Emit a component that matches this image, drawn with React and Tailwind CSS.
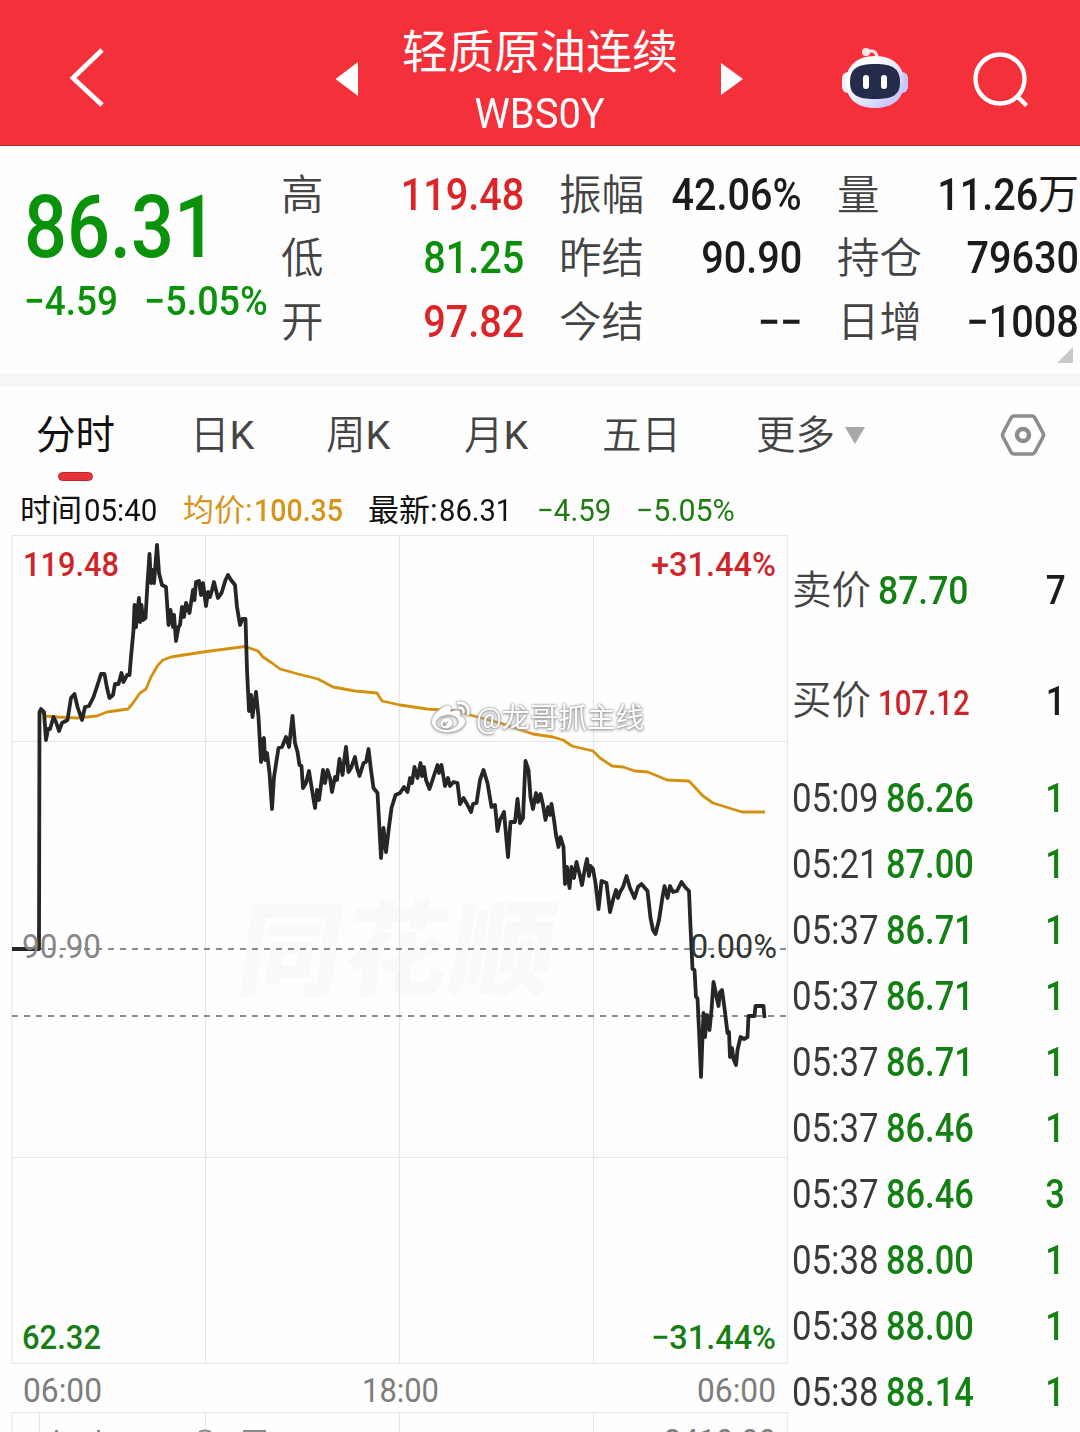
import React from 'react';
import { FaWeibo } from 'react-icons/fa';

const stats = [
  [
    { label: '高', value: '119.48', color: 'text-[#dc2529]' },
    { label: '低', value: '81.25', color: 'text-[#0a8f0a]' },
    { label: '开', value: '97.82', color: 'text-[#dc2529]' },
  ],
  [
    { label: '振幅', value: '42.06%' },
    { label: '昨结', value: '90.90' },
    { label: '今结', value: '−−' },
  ],
  [
    { label: '量', value: '11.26', unit: '万' },
    { label: '持仓', value: '79630' },
    { label: '日增', value: '−1008' },
  ],
];

const trades = [
  ['05:09', '86.26', '1'],
  ['05:21', '87.00', '1'],
  ['05:37', '86.71', '1'],
  ['05:37', '86.71', '1'],
  ['05:37', '86.71', '1'],
  ['05:37', '86.46', '1'],
  ['05:37', '86.46', '3'],
  ['05:38', '88.00', '1'],
  ['05:38', '88.00', '1'],
  ['05:38', '88.14', '1'],
];

const pricePoints = `12,949 39,949 39.5,712 41,709 44,712 46,740 48,729 50,729 53.5,717 56,722 59,731 62,723 67.5,720 71,698 74.5,694
77.5,707 82,720 85,707 89,706 93.5,697 97.5,685 101,674 104.5,674 107,688 109.5,698 113,695 115,684 118.5,684 121.5,673 123.5,682
127,675 129.5,675 131,657 133.5,630 134.5,605 136,627 137.5,610 139,598 140,622 141.5,605 143,620 145.5,618 147.5,583 149.5,554 151,583 152.5,570 154,583
157,545 159,573 162,585 166,587 168.5,625 170.5,610 173,627 174,615 176,641 178.5,627 180,625 182,607 184,617 186,603 189.5,613 193,590
194.5,600 196,582 199,581 201,595 203,583 206,606 208,592 210,597 212,590 214,582 218,598 221.5,593 225.5,580 228,575 231,580 235,585 237,607 240,625 242.5,619
245.5,619 247,670 249,711 251,695 252.5,717 254,705 256,692 258.5,717 261,762 262.5,740 264,738 265,760 267,753 269.5,773 272,809 274,777 278.5,748 282,747
286,737 289,747 292.5,716 295,743 297.5,752 299.5,765 301.5,766 303,788 306,783 309,771 312,790 315,808 317,790 319,800 323,770 325,783 327.5,770 330,778 332,792
335,777 337,780 339.5,759 342.5,775 344,762 346,747 348.5,772 351,768 355,757 357,768 359.5,776 363.5,763 366,762 368.5,749 371,770 373.5,788 377.5,793 379,820
381,858 383.5,828 386,852 389,827 391.5,808 395.5,795 400,793 404,787 407.5,792 410,778 412,783 414.5,767 417.5,778 420.5,763 422,776 424,767 426,780
429.5,789 433.5,777 437.5,765 439,773 441.5,765 445,786 448,778 450,786 453.5,782 457.5,783 460,804 463.5,798 467,804 471,812 473,804 476.5,803 480,780 483.5,770
487.5,783 491.5,807 495,805 497.5,831 500,820 504,812 508,857 510.5,822 515,822 517.5,799 520,823 523,818 525.5,761 528.5,770 530.5,797 533,809
536,793 538,802 540.5,794 543,805 545.5,820 548,807 550,815 551.5,804 554,820 556,835 558.5,847 560.5,837 563.5,847 565,884 567,867 569.5,888 571.5,867 574,878 576.5,862
580,876 582,885 585,868 587,859 589,876 590.5,866 593,869 595.5,883 598.5,909 601.5,881 606.5,883 610,912 613.5,898 616,890 618,898 620,892 623,887 626.5,876 630,888
634.5,898 638,887 641.5,884 647.5,891 650.5,918 653,930 655.5,934 659,920 662.5,897 664.5,886 667.5,898 670,886 673,892 677,891 681.5,882 685,887
689,891 690.5,927 692.5,969 694.5,970 696,997 697.5,998 699,1030 701,1077 702.5,1037 703.5,1013 705,1037 707,1015 709.5,1030 711.5,1010 713.5,982 716,994
718.5,1006 720,992 722,990 724.5,1008 727.5,1033 729,1032 730,1057 732,1048 733.5,1059 736,1065 737.5,1050 740.5,1037 744,1039 747.5,1037 748.5,1016 754.5,1016 755.5,1006 763.5,1006 764.5,1018`;

const avgPoints = `41,712 46,716 57,717 77,718 97,716 107,712 128,709 133,703 140,693 146,689 151,677 158,665 163,660 171,657 203,652 245,646.5
258,651 263,657 272,663 280,669 298,674 318,679 333,687 355,691 377,693 382,701 400,705 427,709 457,711 470,715 500,723 533,734
553,737 563,740 572,746 593,751 600,758 612,766 623,767 635,771 648,772 667,780 689,781 703,796 713,803 742,812 765,812`;

const ChartText = ({ x, y, w, className, children }) => (
  <text x={x} y={y} textLength={w} lengthAdjust="spacingAndGlyphs" fontSize="34" className={className}>
    {children}
  </text>
);

const Header = () => (
  <header className="flex h-[146px] items-center border-b border-[#b3262e] bg-[#f4303a]">
    <svg className="ml-[66px] mt-2 h-[64px] w-[40px]" viewBox="0 0 40 64" fill="none" stroke="white" strokeWidth="4.8">
      <path d="M36 5 L7 33 L36 60" />
    </svg>
    <svg className="ml-[229px] mt-3 h-[36px] w-[24px]" viewBox="0 0 24 36" fill="white">
      <path d="M0.5 18 L23 1 V35 Z" />
    </svg>
    <div className="ml-[41px] flex w-[280px] flex-col items-center pt-4 text-white">
      <div className="h-[62px] whitespace-nowrap text-[46px] leading-[62px]">轻质原油连续</div>
      <div className="h-[58px] scale-x-[0.95] text-[42px] leading-[62px]">WBS0Y</div>
    </div>
    <svg className="ml-[40px] mt-3 h-[36px] w-[24px]" viewBox="0 0 24 36" fill="white">
      <path d="M23 18 L1 2 V34 Z" />
    </svg>
    <svg className="ml-[96px] mt-2 h-[66px] w-[70px]" viewBox="0 0 70 66">
      <defs>
        <linearGradient id="helmet" x1="0" y1="0" x2="1" y2="1">
          <stop offset="0.3" stopColor="#ffffff" />
          <stop offset="1" stopColor="#b9b8fb" />
        </linearGradient>
      </defs>
      <path d="M27 8 C34 5 37 9 37 14" fill="none" stroke="#ffe9ec" strokeWidth="3" />
      <circle cx="26" cy="8" r="4" fill="#ffe9ec" />
      <rect x="2" y="28" width="12" height="21" rx="6" fill="#eeeefe" />
      <rect x="56" y="28" width="12" height="21" rx="6" fill="#c5c8fb" />
      <path d="M35 12 C54 12 64 23 64 38 C64 55 53 64 35 64 C17 64 6 55 6 38 C6 23 16 12 35 12 Z" fill="url(#helmet)" />
      <path d="M35 20 C53 20 60 25 60 38 C60 51 53 55 35 55 C17 55 10 51 10 38 C10 25 17 20 35 20 Z" fill="#252b4b" />
      <rect x="23" y="31" width="6" height="14" rx="3" fill="white" />
      <rect x="41" y="31" width="6" height="14" rx="3" fill="white" />
    </svg>
    <svg className="ml-[62px] mt-[16px] h-[60px] w-[60px]" viewBox="0 0 60 60" fill="none" stroke="white" strokeWidth="4.4">
      <circle cx="28" cy="28" r="24.5" />
      <path d="M44.5 44.5 L54.5 54.5" />
    </svg>
  </header>
);

const StatColumn = ({ rows, className }) => (
  <div className={`flex flex-col ${className}`}>
    {rows.map((row) => (
      <div key={row.label} className="flex h-[63.5px] items-center justify-between whitespace-nowrap">
        <span className="pt-[6px] text-[42.5px] font-[350] text-[#444]">{row.label}</span>
        <span className={`flex items-center font-medium ${row.color || 'text-[#1c1a1b]'}`}>
          <span className="origin-right scale-x-[0.9] pt-1 text-[44px]">{row.value}</span>
          {row.unit && <span className="pt-[6px] text-[41px] font-normal">{row.unit}</span>}
        </span>
      </div>
    ))}
  </div>
);

const Quote = () => (
  <section className="flex h-[227px] pt-[15px]">
    <div className="w-[281px] shrink-0 whitespace-nowrap pl-[24px] font-medium text-[#0a930a]">
      <div className="h-[110px] origin-left scale-x-[0.86] text-[88px] leading-[132px]">86.31</div>
      <div className="flex h-[60px] items-center text-[41px] leading-[60px]">
        <span className="w-[120px] origin-left scale-x-[0.9]">−4.59</span>
        <span className="origin-left scale-x-[0.92]">−5.05%</span>
      </div>
    </div>
    <StatColumn rows={stats[0]} className="w-[243px]" />
    <StatColumn rows={stats[1]} className="ml-[35px] w-[243px]" />
    <div className="relative ml-[35px] w-[242px]">
      <StatColumn rows={stats[2]} className="w-full" />
      <svg className="absolute right-[6px] top-[186px] h-4 w-4" viewBox="0 0 16 16" fill="#c8c8c8">
        <path d="M16 0 V16 H0 Z" />
      </svg>
    </div>
  </section>
);

const Tabs = () => (
  <nav className="flex h-[104px] items-start whitespace-nowrap pt-[14px] text-[39.5px] font-[350] leading-[70px] text-[#444]">
    <div className="ml-[36px] flex w-[154px] flex-col font-normal text-[#111]">
      分时
      <span className="ml-[22px] mt-[1px] h-[9px] w-[35px] rounded-full border border-[#c0262c] bg-[#e5353b]"></span>
    </div>
    <div className="w-[136px]">日<span className="font-normal">K</span></div>
    <div className="w-[138px]">周<span className="font-normal">K</span></div>
    <div className="w-[138px]">月<span className="font-normal">K</span></div>
    <div className="w-[154px]">五日</div>
    <div className="flex w-[244px] items-center">
      更多
      <svg className="ml-[10px] mb-[3px] h-[18px] w-[20px]" viewBox="0 0 20 18" fill="#a8a8a8">
        <path d="M0 1 H20 L10 18 Z" />
      </svg>
    </div>
    <svg className="mt-3 h-[44px] w-[46px]" viewBox="0 0 46 44" fill="none" stroke="#8c8c8c">
      <path d="M14 3 H32 Q34 3 35 5 L43 20 Q44 22 43 24 L35 39 Q34 41 32 41 H14 Q12 41 11 39 L3 24 Q2 22 3 20 L11 5 Q12 3 14 3 Z" strokeWidth="3.6" />
      <circle cx="23" cy="22" r="6" strokeWidth="4.5" />
    </svg>
  </nav>
);

const InfoBar = () => (
  <div className="flex h-[44px] items-center whitespace-nowrap pb-[4px] text-[31px] leading-[44px] text-[#111]">
    <div className="ml-5 flex w-[163px]">时间<span className="ml-[2px] origin-left scale-x-[0.95]">05:40</span></div>
    <div className="flex w-[185px] text-[#d8941a]">均价:<span className="ml-[1px] origin-left scale-x-[0.92] font-medium">100.35</span></div>
    <div className="flex w-[168px]">最新:<span className="ml-[1px] origin-left scale-x-[0.94]">86.31</span></div>
    <div className="ml-[1px] w-[99px] origin-left scale-x-[0.95] text-[#1f7d12]">−4.59</div>
    <div className="origin-left scale-x-[0.98] text-[#1f7d12]">−5.05%</div>
  </div>
);

const Chart = () => (
  <div className="relative h-[897px] w-[790px] shrink-0">
    <svg className="block h-[897px] w-[790px]" viewBox="0 535 790 897">
      <text x="0" y="0" fontSize="104" fontWeight="900" textLength="316" transform="translate(234 988) skewX(-8)" fill="#f8f9f9">同花顺</text>

      {/* grid */}
      <g stroke="#e6e6e6" strokeWidth="1.2" fill="none">
        <rect x="12" y="535.5" width="775.5" height="828" />
        <path d="M205.5 535 V1363 M399.5 535 V1363 M593.5 535 V1363" />
        <path d="M12 741.5 H787 M12 1157.5 H787" />
        <path d="M12 1432 V1412.5 H787.5 V1432 M39.5 1412 V1432 M205.5 1412 V1432 M399.5 1412 V1432 M593.5 1412 V1432" />
      </g>
      <path d="M36 949 H787 M12 1016 H787" stroke="#666" strokeWidth="1.5" strokeDasharray="6 6" />

      <polyline points={avgPoints} fill="none" stroke="#d4900f" strokeWidth="2.8" strokeLinejoin="round" />
      <polyline points={pricePoints} fill="none" stroke="#262626" strokeWidth="3.8" strokeLinejoin="round" />

      <g fontWeight="500">
        <ChartText x="23" y="576" w="96" className="fill-[#cf2529]">119.48</ChartText>
        <ChartText x="651" y="576" w="125" className="fill-[#cf2529]">+31.44%</ChartText>
        <ChartText x="22" y="1349" w="79" className="fill-[#177d14]">62.32</ChartText>
        <ChartText x="651" y="1349" w="125" className="fill-[#177d14]">−31.44%</ChartText>
      </g>
      <ChartText x="22" y="958" w="79" className="fill-[#868686]">90.90</ChartText>
      <ChartText x="690" y="958" w="87" className="fill-[#333]">0.00%</ChartText>
      <ChartText x="23" y="1402" w="79" className="fill-[#7d7d7d]">06:00</ChartText>
      <ChartText x="362" y="1402" w="77" className="fill-[#7d7d7d]">18:00</ChartText>
      <ChartText x="697" y="1402" w="79" className="fill-[#7d7d7d]">06:00</ChartText>
      <ChartText x="664" y="1453" w="112" className="fill-[#7d7d7d]">3410.00</ChartText>

      {/* top edges of the volume legend */}
      <path d="M55 1431 H58 M97 1431 H100 M199 1432 Q205 1429 211 1432 M243 1431 H266" stroke="#8a8a8a" strokeWidth="2" fill="none" />
    </svg>
    <div className="absolute left-[432px] top-[162px] flex items-center text-[28.5px] leading-[40px] text-white [filter:drop-shadow(0_0_1px_#888)_drop-shadow(0_1px_1.5px_#aaa)]">
      <FaWeibo size={38} />
      <span className="ml-[6px] whitespace-nowrap pt-[2px]">@龙哥抓主线</span>
    </div>
  </div>
);

const BookRow = ({ label, price, count, priceClass }) => (
  <div className="flex h-[110.5px] items-center whitespace-nowrap">
    <span className="w-[86px] text-[39.5px] font-[350] text-[#444]">{label}</span>
    <span className={`w-[150px] origin-left pt-[2px] font-medium ${priceClass}`}>{price}</span>
    <span className="ml-auto mr-[14px] origin-right scale-x-[0.88] pt-[2px] text-[40px] font-medium text-[#1c1a1b]">{count}</span>
  </div>
);

const Ticks = () => (
  <aside className="flex-1 whitespace-nowrap pl-[2px]">
    <BookRow label="卖价" price="87.70" count="7" priceClass="text-[39px] text-[#128012] scale-x-[0.91]" />
    <BookRow label="买价" price="107.12" count="1" priceClass="text-[35px] leading-[46px] pt-[6px] text-[#cc2428] scale-x-[0.84]" />
    <div className="mt-[10px] flex flex-col text-[40px] leading-[66px]">
      {trades.map(([time, price, count], i) => (
        <div key={i} className="flex h-[66px] font-medium text-[#128012]">
          <span className="w-[94px] origin-left scale-x-[0.87] font-normal text-[#3a393b]">{time}</span>
          <span className="origin-left scale-x-[0.86]">{price}</span>
          <span className="ml-auto mr-[15px] origin-right scale-x-[0.86]">{count}</span>
        </div>
      ))}
    </div>
  </aside>
);

const App = () => {
  return (
    <div className="h-[1432px] w-[1080px] overflow-hidden bg-[#fefefe] font-[Roboto,'Noto_Sans_CJK_SC',sans-serif]">
      <Header />
      <Quote />
      <div className="h-[14px] bg-[#f8f8f8]"></div>
      <Tabs />
      <InfoBar />
      <main className="flex">
        <Chart />
        <Ticks />
      </main>
    </div>
  );
};

export default App;
